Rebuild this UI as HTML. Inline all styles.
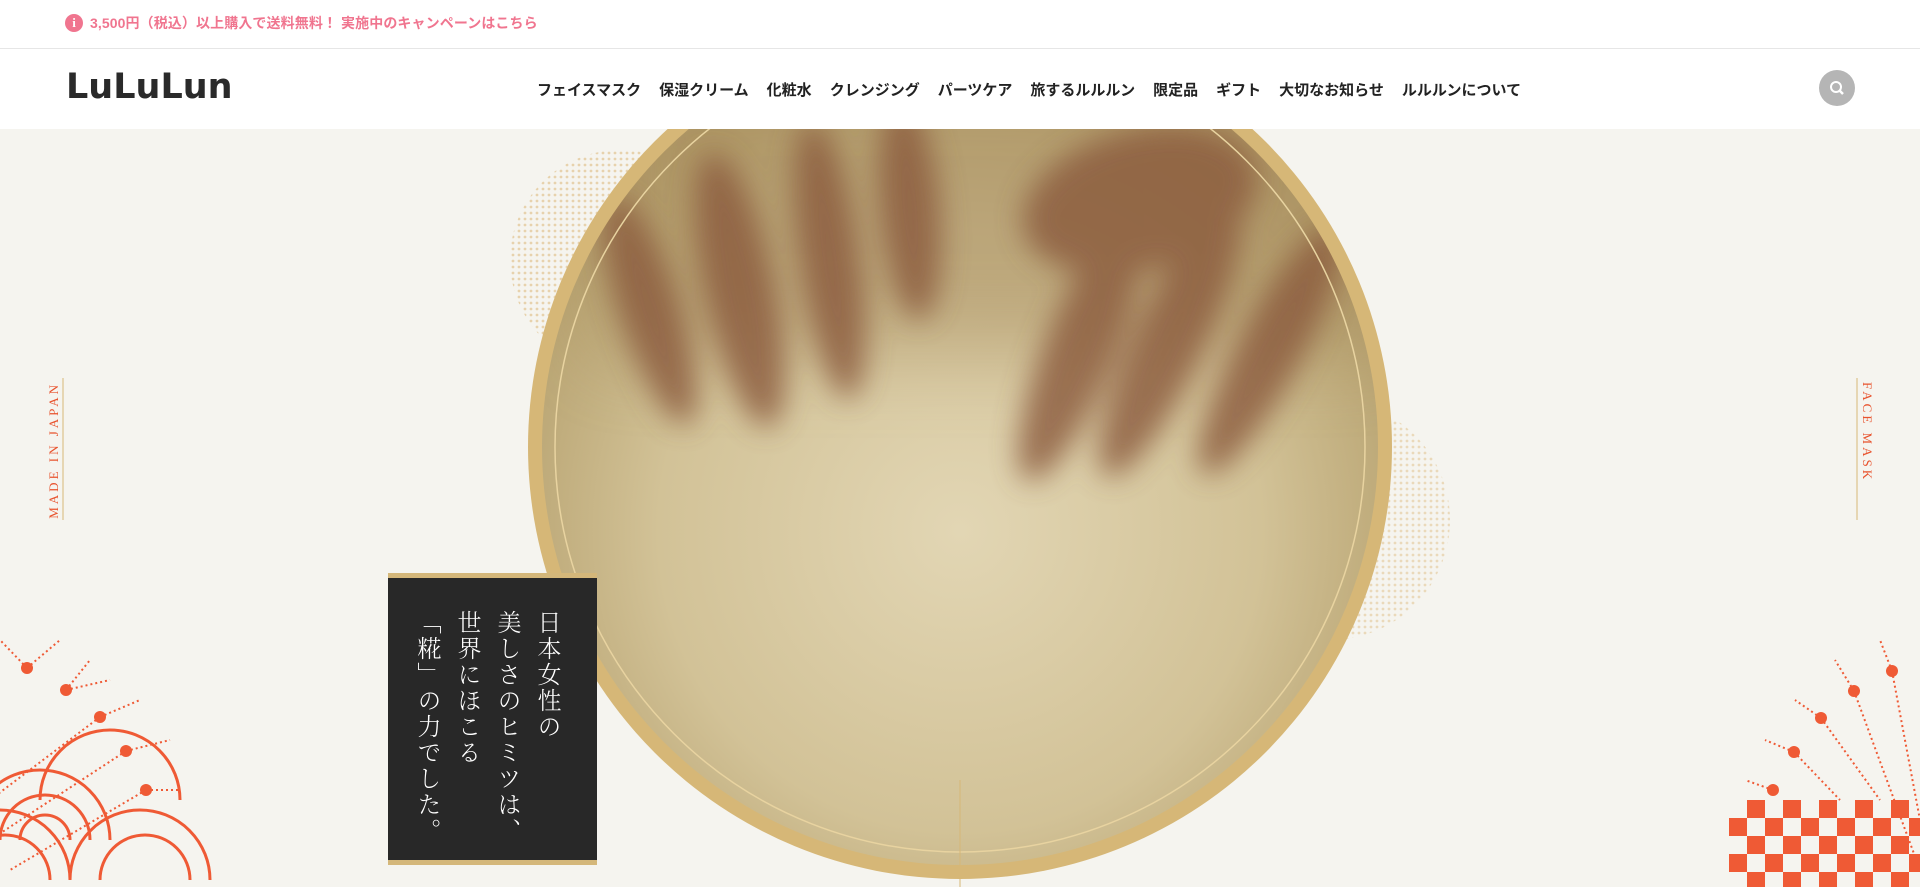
<!DOCTYPE html>
<html><head><meta charset="utf-8"><style>
*{margin:0;padding:0;box-sizing:border-box}
body{width:1920px;height:887px;overflow:hidden;background:#f5f4ef;font-family:"Liberation Sans","Noto Sans CJK JP",sans-serif;position:relative}
.top{position:absolute;left:0;top:0;width:1920px;height:49px;background:#fff;border-bottom:1px solid #e6e6e6;z-index:6}
.top .i{position:absolute;left:65px;top:14px;width:18px;height:18px;border-radius:50%;background:#f0758f;color:#fff;font:bold 13px/18px "Liberation Serif",serif;text-align:center}
.top span.t{position:absolute;left:90px;top:13px;font-size:14px;color:#f0758f;font-weight:bold;letter-spacing:.1px}
.hd{position:absolute;left:0;top:49px;width:1920px;height:80px;background:#fff;z-index:5}
.logo{position:absolute;left:66px;top:18px;font:bold 35px/40px "DejaVu Sans",sans-serif;color:#2a2a2a;letter-spacing:0px}
.nav{position:absolute;left:537px;top:30px;font-size:15px;font-weight:bold;color:#222;white-space:nowrap}
.nav span{margin-right:18px}
.srch{position:absolute;left:1819px;top:21px;width:36px;height:36px;border-radius:50%;background:#b5b5b5}
.side{position:absolute;writing-mode:vertical-rl;font:13px "Liberation Serif",serif;letter-spacing:3px;color:#e8532e}
.box{position:absolute;left:388px;top:573px;width:209px;height:292px;background:#282828;border-top:5px solid #d4b77a;border-bottom:5px solid #d4b77a;z-index:4}
.box p{position:absolute;right:28px;top:32px;writing-mode:vertical-rl;color:#fff;font:300 24px/40px "Noto Serif CJK SC","Noto Sans CJK JP",serif;letter-spacing:2px;height:250px;white-space:nowrap}
</style></head><body>
<div class="top"><div class="i">i</div><span class="t">3,500円（税込）以上購入で送料無料！ 実施中のキャンペーンはこちら</span></div>

<svg width="1920" height="887" style="position:absolute;left:0;top:0">
<defs>
<radialGradient id="ph" cx="50%" cy="60%" r="60%"><stop offset="0" stop-color="#e2d6b4"/><stop offset=".6" stop-color="#d2c297"/><stop offset="1" stop-color="#b29c68"/></radialGradient>
<pattern id="dt" width="6" height="6" patternUnits="userSpaceOnUse"><circle cx="3" cy="3" r="1.4" fill="#d9b06a"/></pattern>
<clipPath id="cc"><circle cx="960" cy="447" r="418"/></clipPath>
<filter id="bl" filterUnits="userSpaceOnUse" x="0" y="-200" width="1920" height="1200"><feGaussianBlur stdDeviation="14"/></filter>
<filter id="bl2" filterUnits="userSpaceOnUse" x="0" y="-200" width="1920" height="1200"><feGaussianBlur stdDeviation="40"/></filter>
</defs>
<circle cx="620" cy="260" r="110" fill="url(#dt)" opacity=".5"/>
<circle cx="1330" cy="520" r="120" fill="url(#dt)" opacity=".4"/>
<circle cx="960" cy="447" r="432" fill="#d6b777"/>
<circle cx="960" cy="447" r="418" fill="url(#ph)"/>
<g clip-path="url(#cc)">
<rect x="600" y="60" width="800" height="290" fill="#a58a5c" opacity=".5" filter="url(#bl2)"/>
<g fill="#8a5a3c" opacity=".8" filter="url(#bl)">
<ellipse cx="650" cy="310" rx="30" ry="120" transform="rotate(-18 650 310)"/>
<ellipse cx="740" cy="290" rx="35" ry="140" transform="rotate(-12 740 290)"/>
<ellipse cx="830" cy="260" rx="30" ry="140" transform="rotate(-8 830 260)"/>
<ellipse cx="910" cy="210" rx="30" ry="110" transform="rotate(-5 910 210)"/>
<ellipse cx="1080" cy="350" rx="35" ry="140" transform="rotate(22 1080 350)"/>
<ellipse cx="1170" cy="340" rx="35" ry="150" transform="rotate(25 1170 340)"/>
<ellipse cx="1270" cy="350" rx="32" ry="140" transform="rotate(28 1270 350)"/>
<ellipse cx="1140" cy="200" rx="120" ry="70" transform="rotate(-15 1140 200)"/>
</g>
</g>
<circle cx="960" cy="447" r="405" fill="none" stroke="#e8d3a0" stroke-width="1.5"/>
<line x1="960" y1="780" x2="960" y2="887" stroke="#d6b777" stroke-width="1"/>
<g stroke="#ef5a35" fill="none" stroke-width="3">
<path d="M-30 840 a70 70 0 0 1 140 0 M0 840 a45 45 0 0 1 90 0 M20 840 a25 25 0 0 1 50 0"/>
<path d="M40 800 a70 70 0 0 1 140 0"/>
<path d="M-70 880 a70 70 0 0 1 140 0 M-40 880 a45 45 0 0 1 90 0 M70 880 a70 70 0 0 1 140 0 M100 880 a45 45 0 0 1 90 0"/>
</g>
<g fill="#ef5a35">
<circle cx="27" cy="668" r="6"/><circle cx="66" cy="690" r="6"/><circle cx="100" cy="717" r="6"/><circle cx="126" cy="751" r="6"/><circle cx="146" cy="790" r="6"/>
</g>
<g stroke="#ef5a35" stroke-width="2" stroke-dasharray="2 3" fill="none">
<path d="M27 668 L0 640 M27 668 L60 640 M66 690 L90 660 M66 690 L110 680 M100 717 L140 700 M126 751 L170 740 M146 790 L180 790 M146 790 L10 870 M126 751 L-10 840 M100 717 L-10 800"/>
</g>
<g fill="#ef5a35">
<circle cx="1773" cy="790" r="6"/><circle cx="1794" cy="752" r="6"/><circle cx="1821" cy="718" r="6"/><circle cx="1854" cy="691" r="6"/><circle cx="1892" cy="671" r="6"/>
</g>
<g stroke="#ef5a35" stroke-width="2" stroke-dasharray="2 3" fill="none">
<path d="M1773 790 L1745 780 M1794 752 L1765 740 M1821 718 L1795 700 M1854 691 L1835 660 M1892 671 L1880 640 M1892 671 L1920 820 M1854 691 L1920 870 M1821 718 L1880 800 M1794 752 L1840 800"/>
</g>
<g fill="#ef5a35">
<rect x="1747" y="800" width="18" height="18"/><rect x="1783" y="800" width="18" height="18"/><rect x="1819" y="800" width="18" height="18"/><rect x="1855" y="800" width="18" height="18"/><rect x="1891" y="800" width="18" height="18"/>
<rect x="1729" y="818" width="18" height="18"/><rect x="1765" y="818" width="18" height="18"/><rect x="1801" y="818" width="18" height="18"/><rect x="1837" y="818" width="18" height="18"/><rect x="1873" y="818" width="18" height="18"/><rect x="1909" y="818" width="18" height="18"/>
<rect x="1747" y="836" width="18" height="18"/><rect x="1783" y="836" width="18" height="18"/><rect x="1819" y="836" width="18" height="18"/><rect x="1855" y="836" width="18" height="18"/><rect x="1891" y="836" width="18" height="18"/>
<rect x="1729" y="854" width="18" height="18"/><rect x="1765" y="854" width="18" height="18"/><rect x="1801" y="854" width="18" height="18"/><rect x="1837" y="854" width="18" height="18"/><rect x="1873" y="854" width="18" height="18"/><rect x="1909" y="854" width="18" height="18"/>
<rect x="1747" y="872" width="18" height="18"/><rect x="1783" y="872" width="18" height="18"/><rect x="1819" y="872" width="18" height="18"/><rect x="1855" y="872" width="18" height="18"/><rect x="1891" y="872" width="18" height="18"/>
</g>
<line x1="63" y1="378" x2="63" y2="520" stroke="#d6b777"/>
<line x1="1857" y1="378" x2="1857" y2="520" stroke="#d6b777"/>
</svg>

<div class="hd">
<div class="logo">LuLuLun</div>
<div class="nav"><span>フェイスマスク</span><span>保湿クリーム</span><span>化粧水</span><span>クレンジング</span><span>パーツケア</span><span>旅するルルルン</span><span>限定品</span><span>ギフト</span><span>大切なお知らせ</span><span>ルルルンについて</span></div>
<div class="srch"><svg width="36" height="36"><circle cx="17" cy="17" r="5" stroke="#fff" stroke-width="2" fill="none"/><line x1="20.5" y1="20.5" x2="24" y2="24" stroke="#fff" stroke-width="2.5"/></svg></div>
</div>

<div class="side" style="left:46px;top:382px;transform:rotate(180deg)">MADE IN JAPAN</div>
<div class="side" style="left:1859px;top:382px">FACE MASK</div>

<div class="box"><p>日本女性の<br>美しさのヒミツは、<br>世界にほこる<br>「糀」の力でした。</p></div>
</body></html>
